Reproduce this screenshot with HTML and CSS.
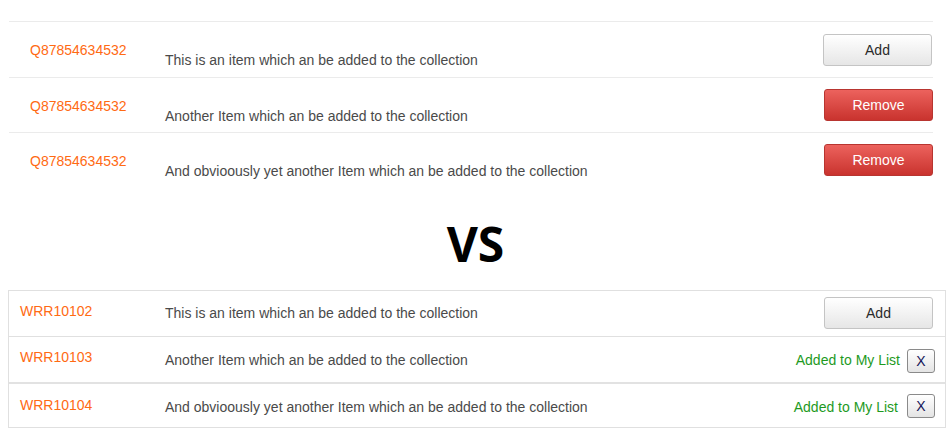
FILE: index.html
```html
<!DOCTYPE html>
<html>
<head>
<meta charset="utf-8">
<link rel="stylesheet" href="styles.css">
</head>
<body>
<div class="list-a">
  <div class="row-a first">
    <div class="id-a">Q87854634532</div>
    <div class="desc-a">This is an item which an be added to the collection</div>
    <button class="btn btn-add">Add</button>
  </div>
  <div class="row-a">
    <div class="id-a">Q87854634532</div>
    <div class="desc-a">Another Item which an be added to the collection</div>
    <button class="btn btn-remove">Remove</button>
  </div>
  <div class="row-a">
    <div class="id-a">Q87854634532</div>
    <div class="desc-a">And obvioously yet another Item which an be added to the collection</div>
    <button class="btn btn-remove">Remove</button>
  </div>
</div>

<h1 class="vs">VS</h1>

<div class="list-b">
  <div class="row-b r1">
    <div class="id-b">WRR10102</div>
    <div class="desc-b">This is an item which an be added to the collection</div>
    <button class="btn btn-add">Add</button>
  </div>
  <div class="row-b r2">
    <div class="id-b">WRR10103</div>
    <div class="desc-b">Another Item which an be added to the collection</div>
    <div class="added">Added to My List</div>
    <button class="btn-x">X</button>
  </div>
  <div class="row-b r3">
    <div class="id-b">WRR10104</div>
    <div class="desc-b">And obvioously yet another Item which an be added to the collection</div>
    <div class="added">Added to My List</div>
    <button class="btn-x">X</button>
  </div>
</div>
</body>
</html>
```
FILE: styles.css
```css
html, body {
  margin: 0;
  padding: 0;
  background: #fff;
}
body {
  font-family: "Liberation Sans", Arial, sans-serif;
  font-size: 14px;
  line-height: 16px;
  color: #4a4a4a;
}
.list-a {
  margin: 21px 0 0 9px;
  width: 924px;
}
.row-a {
  display: flex;
  align-items: flex-start;
  height: 54px;
  border-top: 1px solid #ebebeb;
}
.row-a.first { height: 55px; }
.id-a {
  width: 135px;
  padding: 20px 0 0 21px;
  color: #ff6a13;
}
.desc-a {
  flex: 1;
  padding-top: 30px;
}
.btn {
  font-family: "Liberation Sans", Arial, sans-serif;
  font-size: 14px;
  line-height: 16px;
  height: 32px;
  border-radius: 3px;
  padding: 0;
  cursor: pointer;
}
.row-a .btn { margin-top: 11px; }
.row-a.first .btn { margin-top: 12px; }
.row-a .btn-add { width: 109px; margin-right: 1px; }
.row-a .btn-remove { width: 109px; }
.btn-add {
  color: #2a2a2a;
  border: 1px solid #c4c4c4;
  background: linear-gradient(#ffffff, #e6e6e6);
}
.btn-remove {
  color: #fff;
  border: 1px solid #b83530;
  background: linear-gradient(#ec625d, #c9332e);
}
.vs {
  margin: 33px 0 22px;
  text-align: center;
  font-family: "Open Sans", sans-serif;
  font-weight: 700;
  font-size: 48px;
  line-height: 48px;
  color: #000;
}
.list-b {
  margin-left: 8px;
  width: 936px;
  border: 1px solid #e0e0e0;
}
.row-b {
  display: flex;
  align-items: flex-start;
  height: 45px;
}
.row-b + .row-b { border-top: 1px solid #e0e0e0; }
.row-b.r3 { border-top: 2px solid #e2e2e2; height: 43px; }
.id-b {
  width: 145px;
  padding: 12px 0 0 11px;
  color: #ff6a13;
}
.desc-b {
  flex: 1;
  padding-top: 14px;
}
.r2 .desc-b, .r3 .desc-b { padding-top: 15px; }
.r3 .id-b { padding-top: 13px; }
.row-b .btn-add {
  width: 109px;
  margin: 6px 12px 0 0;
}
.added {
  color: #1e9a1e;
  padding-top: 15px;
  margin-right: 7px;
}
.r3 .added { margin-right: 9px; }
.btn-x {
  width: 28px;
  height: 24px;
  margin: 12px 10px 0 0;
  padding: 0;
  border: 1px solid #8a8a8a;
  border-radius: 3px;
  background: linear-gradient(#ffffff, #e4e4e4);
  font-family: "Liberation Sans", Arial, sans-serif;
  font-size: 14px;
  line-height: 16px;
  color: #16165a;
}
.r3 .btn-x { margin-top: 10px; }
```
